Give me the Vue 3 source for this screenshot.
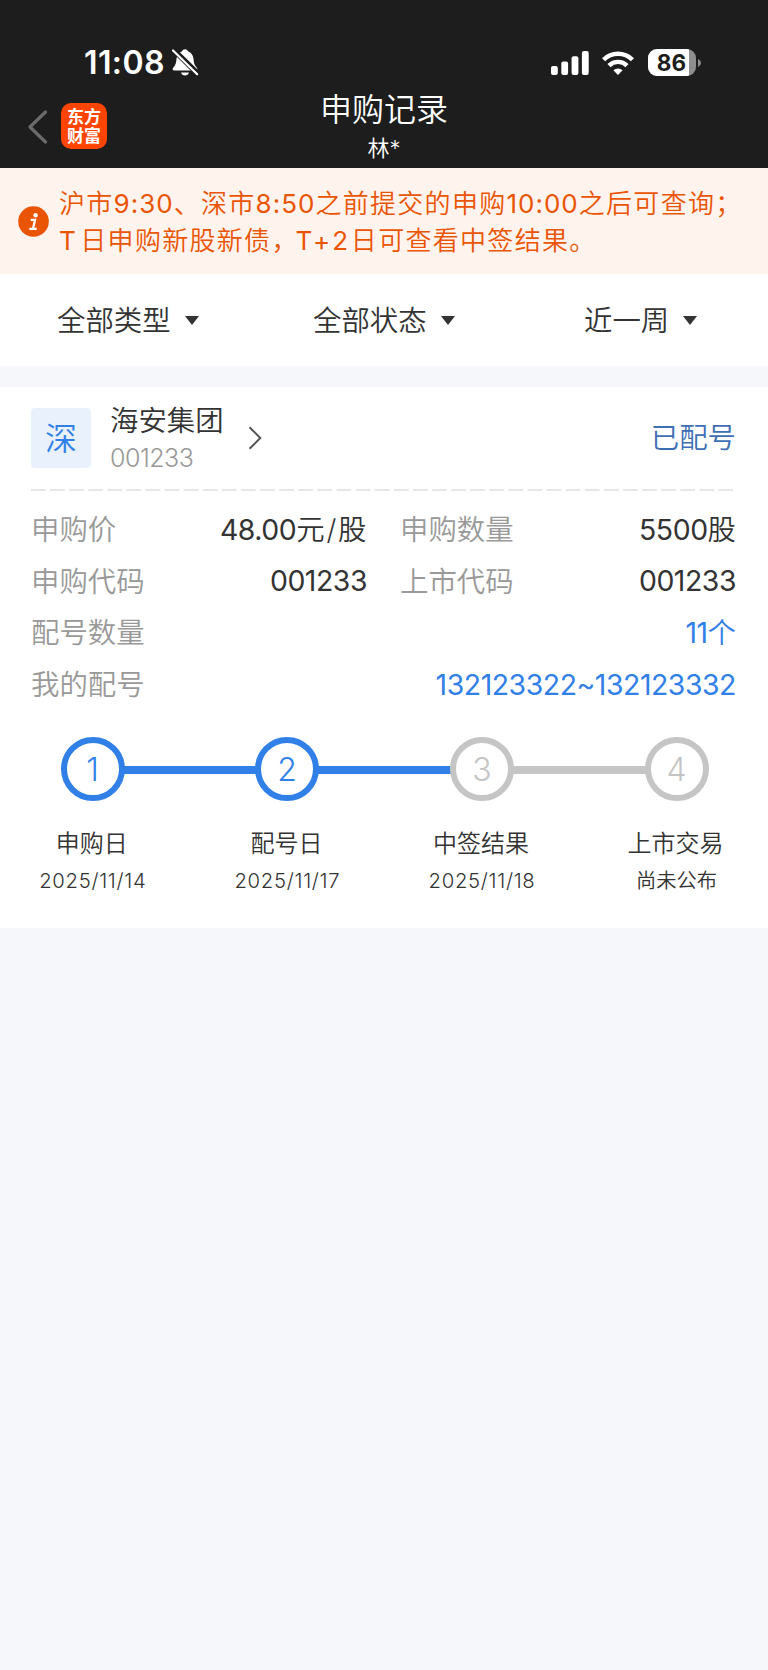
<template>
  <div class="page">
    <header class="header">
      <div class="status-bar">
        <div class="clock">
          <span class="time">11:08</span>
          <svg class="bell" width="28" height="28" viewBox="0 0 28 28">
            <path d="M14 1.200c-1.400 0-2.500.8-2.900 2C7.700 4.400 5.800 7.200 5.500 11c-.3 4.200-1.100 6.200-3 8.200-1.500 1.600-.9 3.300.9 3.300h21.200c1.800 0 2.400-1.700.9-3.300-1.900-2-2.700-4-3-8.200-.3-3.800-2.200-6.600-5.600-7.800-.4-1.200-1.500-2-2.900-2z" fill="#fff" />
            <path d="M10 24.400h8c-.5 1.900-2.100 3-4 3s-3.500-1.100-4-3z" fill="#fff" />
            <path d="M2.600 1.900L26.800 25.700" stroke="#1d1d1d" stroke-width="5.400" />
            <path d="M2 2.500L26.200 26.300" stroke="#fff" stroke-width="2.200" stroke-linecap="round" />
          </svg>
        </div>
        <div class="indicators">
          <svg width="38" height="24" viewBox="0 0 38 24" fill="#fff">
            <rect x="0" y="15" width="6.800" height="9" rx="2" />
            <rect x="10.300" y="10.500" width="6.800" height="13.500" rx="2" />
            <rect x="20.600" y="5.300" width="6.800" height="18.700" rx="2" />
            <rect x="30.900" y="0" width="6.800" height="24" rx="2" />
          </svg>
          <svg class="wifi" width="32" height="24" viewBox="0 0 32 24" fill="none" stroke="#fff" stroke-width="4.400">
            <path d="M1.600 8.700a20.400 20.400 0 0 1 28.800 0" />
            <path d="M7 14.600a12.700 12.700 0 0 1 18 0" />
            <path d="M16 24l-4.600-4.700a6.500 6.500 0 0 1 9.200 0z" fill="#fff" stroke="none" />
          </svg>
          <div class="battery"><span class="battery-level">86</span></div>
          <svg class="battery-tip" width="4" height="8" viewBox="0 0 4 8"><path d="M0 0q3 1.300 3 4t-3 4z" fill="#8e8e8e" /></svg>
        </div>
      </div>
      <div class="nav-bar">
        <div class="nav-left">
          <svg width="20" height="34" viewBox="0 0 20 34" fill="none" stroke="#6b6b6b" stroke-width="3.200" stroke-linecap="round" stroke-linejoin="round">
            <path d="M17.500 2L2 17l15.500 15" />
          </svg>
          <div class="app-logo"><span>东方</span><span>财富</span></div>
        </div>
        <div class="nav-title">
          <h1>申购记录</h1>
          <p>林*</p>
        </div>
      </div>
    </header>

    <section class="notice">
      <svg class="notice-icon" width="31" height="31" viewBox="0 0 31 31">
        <circle cx="15.500" cy="15.500" r="15.300" fill="#ea5504" />
        <circle cx="17.600" cy="9.200" r="2.200" fill="#fff" />
        <path d="M12.700 13.900h4.300l-2 8.800M11.300 22.900h7.400" fill="none" stroke="#fff" stroke-width="2.300" />
      </svg>
      <div class="notice-text">
        <p>沪市<span class="num">9:30</span>、深市<span class="num">8:50</span>之前提交的申购<span class="num">10:00</span>之后可查询；</p>
        <p><span class="day">T</span>日申购新股新债<span class="comma">，</span><span class="day-plus">T+2</span>日可查看中签结果。</p>
      </div>
    </section>

    <nav class="filters">
      <div v-for="f in filters" :key="f" class="filter">
        <span>{{ f }}</span>
        <svg width="14" height="9" viewBox="0 0 14 9"><path d="M0 0h14L7 9z" fill="#333" /></svg>
      </div>
    </nav>

    <main class="card">
      <div class="card-head">
        <span class="market">深</span>
        <div class="stock">
          <div class="stock-name">海安集团</div>
          <div class="stock-code">001233</div>
        </div>
        <svg class="arrow" width="14" height="24" viewBox="0 0 14 24" fill="none" stroke="#555" stroke-width="2">
          <path d="M1.500 1.200L12.300 12 1.500 22.800" />
        </svg>
        <span class="state">已配号</span>
      </div>
      <svg class="divider" width="704" height="2" viewBox="0 0 704 2">
        <path d="M0 1h702" stroke="#dedede" stroke-width="1.300" stroke-dasharray="14.600 4.500" />
      </svg>

      <div class="details">
        <div v-for="d in details" :key="d.label" class="detail" :class="{ wide: d.wide }">
          <span class="label">{{ d.label }}</span>
          <span class="value"><span class="amount">{{ d.value }}</span><span v-if="d.unit" class="unit" :class="{ spaced: d.unit.length > 1 }">{{ d.unit }}</span></span>
        </div>
      </div>

      <div class="track">
        <template v-for="(s, i) in steps" :key="s.name">
          <span v-if="i > 0" class="line" :class="{ done: i <= 2 }"></span>
          <span class="dot" :class="{ done: s.done }">{{ i + 1 }}</span>
        </template>
      </div>
      <div class="step-labels">
        <div v-for="s in steps" :key="s.name" class="step">
          <div class="step-name">{{ s.name }}</div>
          <div class="step-date" :class="{ pending: !s.date }">{{ s.date || '尚未公布' }}</div>
        </div>
      </div>
    </main>
  </div>
</template>

<script setup>
const filters = ['全部类型', '全部状态', '近一周']

const details = [
  { label: '申购价', value: '48.00', unit: '元/股' },
  { label: '申购数量', value: '5500', unit: '股' },
  { label: '申购代码', value: '001233' },
  { label: '上市代码', value: '001233' },
  { label: '配号数量', value: '11', unit: '个', wide: true },
  { label: '我的配号', value: '132123322~132123332', wide: true }
]

const steps = [
  { name: '申购日', date: '2025/11/14', done: true },
  { name: '配号日', date: '2025/11/17', done: true },
  { name: '中签结果', date: '2025/11/18', done: false },
  { name: '上市交易', date: '', done: false }
]
</script>

<style>
body { margin: 0; background: #f5f7fa; }
</style>

<style scoped>
.page {
  width: 768px;
  min-height: 1670px;
  background: #f5f7fa;
  color: #333;
  font-family: Inter, 'Noto Sans CJK SC', sans-serif;
  font-weight: 350;
  overflow: hidden;
}
h1, p { margin: 0; font-weight: inherit; }
svg { display: block; flex-shrink: 0; }

/* header */
.header { height: 168px; background: #1d1d1d; color: #fff; }
.status-bar {
  display: flex;
  justify-content: space-between;
  height: 90px;
  padding: 0 66px 0 84px;
}
.clock { display: flex; }
.time {
  width: 80px;
  margin-top: 45px;
  font-size: 32px;
  line-height: 36px;
  font-weight: 600;
  letter-spacing: 0.4px;
  white-space: nowrap;
}
.bell { margin: 48px 0 0 7px; }
.indicators { display: flex; align-items: center; height: 27px; margin-top: 49px; }
.wifi { margin-left: 13px; }
.battery {
  display: flex;
  width: 48px;
  height: 27px;
  margin-left: 14px;
  border-radius: 9px;
  background: #8e8e8e;
  overflow: hidden;
}
.battery-level {
  width: 41px;
  padding-left: 6px;
  box-sizing: border-box;
  background: #fff;
  color: #1d1d1d;
  font-size: 22.5px;
  line-height: 28px;
  font-weight: 700;
  text-align: center;
}
.battery-tip { margin-left: 2px; }
.nav-bar { display: flex; height: 78px; }
.nav-left { display: flex; width: 240px; padding: 13px 0 0 28px; box-sizing: border-box; align-items: flex-start; }
.nav-left > svg { margin-top: 7px; }
.app-logo {
  display: flex;
  flex-direction: column;
  align-items: center;
  width: 46px;
  height: 46px;
  margin-left: 13px;
  padding-top: 5px;
  box-sizing: border-box;
  border-radius: 10px;
  background: #ff4400;
  font-size: 17px;
  line-height: 19px;
  font-weight: 700;
}
.nav-title { width: 288px; text-align: center; }
.nav-title h1 { font-size: 32px; line-height: 40px; }
.nav-title p { font-size: 22px; line-height: 37px; }

/* notice */
.notice { display: flex; height: 106px; background: #fff3ee; color: #ea5504; }
.notice-icon { margin: 37.5px 0 0 18.2px; }
.notice-text { margin: 17px 0 0 9.8px; font-size: 26px; line-height: 37px; letter-spacing: 1.3px; white-space: nowrap; }
.num, .day, .day-plus { font-weight: 400; }
.num { letter-spacing: 1px; }
.day { letter-spacing: 4.5px; }
.comma { letter-spacing: -2px; }
.day-plus { letter-spacing: 2.8px; }

/* filters */
.filters { display: grid; grid-template-columns: 256px 271px auto; height: 92px; padding-left: 57px; background: #fff; }
.filter { display: flex; align-items: center; gap: 14px; padding-top: 1px; font-size: 28.4px; line-height: 40px; }

/* card */
.card { height: 541px; margin-top: 21px; padding: 0 32px 0 31px; box-sizing: border-box; background: #fff; }
.card-head { display: flex; height: 102px; }
.market {
  width: 60px;
  height: 60px;
  margin-top: 21px;
  border-radius: 4px;
  background: #e9f1fc;
  color: #3080e8;
  font-size: 32px;
  line-height: 61px;
  text-align: center;
}
.stock { width: 121px; margin: 14px 0 0 19px; }
.stock-name { font-size: 28.4px; line-height: 40px; white-space: nowrap; }
.stock-code { color: #999; font-size: 25px; line-height: 35px; letter-spacing: -0.5px; }
.arrow { margin: 39px 0 0 17px; }
.state { margin: 31px 0 0 auto; color: #3e6fb3; font-size: 28.4px; line-height: 40px; }
.details { display: grid; grid-template-columns: 336px 336px; column-gap: 33px; grid-auto-rows: 51.6px; margin-top: 13.5px; }
.detail { display: flex; justify-content: space-between; align-items: center; font-size: 28.4px; line-height: 40px; white-space: nowrap; }
.detail.wide { grid-column: 1 / 3; }
.detail.wide .value { color: #3080e8; }
.label { color: #999; }
.value { margin-bottom: 1px; }
.amount { font-weight: 400; letter-spacing: -0.45px; }
.unit.spaced { margin-right: -1.3px; letter-spacing: 1.8px; }

/* progress */
.track { display: flex; align-items: center; width: 648px; margin: 26px 0 0 29.500px; }
.dot {
  width: 64px;
  height: 64px;
  box-sizing: border-box;
  border: 6px solid #c5c5c5;
  border-radius: 50%;
  color: #c5c5c5;
  font-size: 32px;
  line-height: 53px;
  font-weight: 300;
  text-align: center;
}
.dot.done { border-color: #3080e8; color: #3080e8; }
.line { flex: 1; height: 8px; margin: 2px -1px 0; background: #c5c5c5; }
.line.done { background: #3080e8; }
.step-labels { display: grid; grid-template-columns: repeat(4, 194.600px); margin: 25px 0 0 -36.5px; }
.step { text-align: center; white-space: nowrap; }
.step-name { font-size: 24px; line-height: 36px; }
.step-date { padding-left: 2px; font-size: 20.3px; line-height: 38px; letter-spacing: 0.7px; }
.step-date.pending { letter-spacing: 0; }
</style>
